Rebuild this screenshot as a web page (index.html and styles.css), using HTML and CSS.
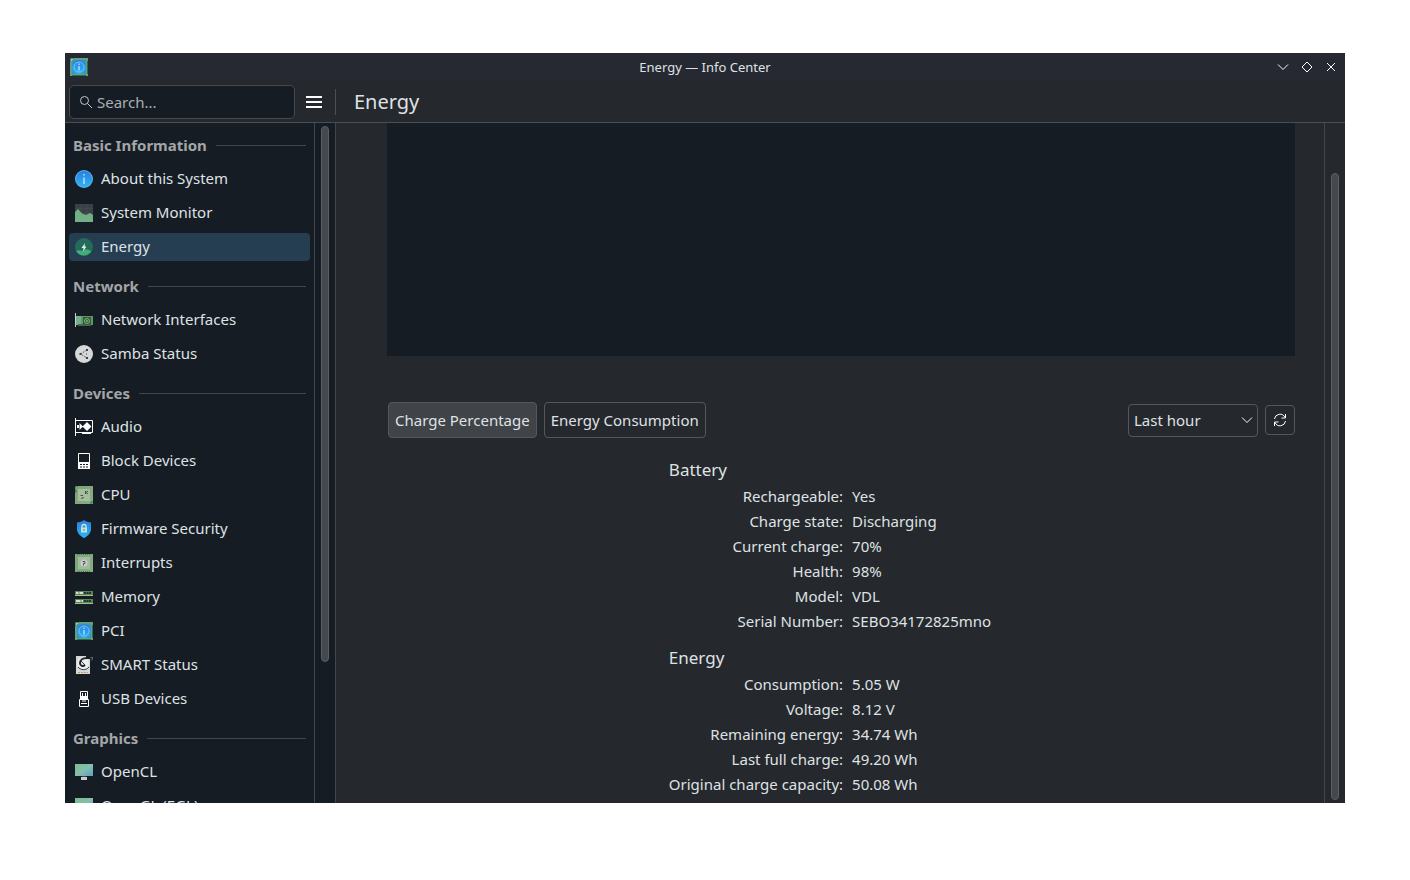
FILE: index.html
```
<!DOCTYPE html>
<html lang="en">
<head>
  <meta charset="UTF-8">
  <meta name="viewport" content="width=device-width, initial-scale=1.0">
  <title>Energy — Info Center</title>
  <link rel="stylesheet" href="styles.css">
</head>
<body>
  <!-- shared icon shapes -->
  <svg class="defs" aria-hidden="true">
    <defs>
      <linearGradient id="blue" x1="0" y1="0" x2="0" y2="1">
        <stop offset="0" stop-color="#2a7fe0"/>
        <stop offset="1" stop-color="#2fb4f4"/>
      </linearGradient>
      <linearGradient id="board" x1="0" y1="0" x2="1" y2="1">
        <stop offset="0" stop-color="#7ba577"/>
        <stop offset="1" stop-color="#86ad80"/>
      </linearGradient>
      <linearGradient id="screen" x1="0" y1="0" x2="1" y2="1">
        <stop offset="0" stop-color="#6fb592"/>
        <stop offset="0.5" stop-color="#86bfae"/>
        <stop offset="1" stop-color="#5a9fc0"/>
      </linearGradient>
      <symbol id="icon-pci" viewBox="0 0 18 18">
        <rect width="18" height="18" fill="#5fa184"/>
        <path d="M0 4V0h4M2 17.500h14M17.500 3v13" fill="none" stroke="#2f6a4c"/>
        <rect x="1" y="1" width="2" height="2" fill="#9fd0a0"/>
        <rect x="2" y="2" width="14" height="14" fill="#3b93b8"/>
        <circle cx="9" cy="9" r="7" fill="url(#blue)"/>
        <circle cx="9" cy="9" r="5" fill="none" stroke="#72c4f6"/>
        <path d="M9 5.500v1.500M9 8v4.500" stroke="#c4e8fc" stroke-width="1.200"/>
      </symbol>
      <symbol id="icon-screen" viewBox="0 0 18 18">
        <rect y="1" width="18" height="12" fill="url(#screen)"/>
        <path d="M0 1h9L4 13H0z" fill="#84c49a" opacity="0.500"/>
        <rect x="7" y="13" width="4" height="2" fill="#3a4147"/>
        <rect x="6" y="14" width="6" height="3" fill="#c9cdd0"/>
      </symbol>
    </defs>
  </svg>

  <div class="window">
    <header class="titlebar">
      <svg class="icon app-icon"><use href="#icon-pci"/></svg>
      <span class="window-title">Energy — Info Center</span>
      <div class="window-buttons">
        <button type="button" aria-label="Minimize"><svg viewBox="0 0 12 12"><path d="M1 3.500l5 5 5-5"/></svg></button>
        <button type="button" aria-label="Maximize"><svg viewBox="0 0 12 12"><path d="M6 1l5 5-5 5-5-5z"/></svg></button>
        <button type="button" aria-label="Close"><svg viewBox="0 0 12 12"><path d="M2 2l8 8M10 2l-8 8"/></svg></button>
      </div>
    </header>

    <div class="toolbar">
      <div class="toolbar-side">
        <label class="search">
          <svg viewBox="0 0 14 14" aria-hidden="true"><circle cx="5.500" cy="5.500" r="4"/><path d="M8.500 8.500l4.500 4.500"/></svg>
          <input type="text" placeholder="Search..." aria-label="Search">
        </label>
        <button type="button" class="menu-button" aria-label="Menu">
          <svg viewBox="0 0 16 12"><path d="M0 1h16M0 6h16M0 11h16"/></svg>
        </button>
      </div>
      <h1>Energy</h1>
    </div>

    <div class="content">
      <nav class="sidebar">
        <h2>Basic Information</h2>
        <ul>
          <li><a href="#about">
            <svg class="icon" viewBox="0 0 18 18"><circle cx="9" cy="9" r="9" fill="#55b4f5"/><circle cx="9" cy="9" r="8" fill="url(#blue)"/><path d="M9 4v1.500M9 7.500v6.500" stroke="#d3ecfc" stroke-width="1.300"/></svg>
            About this System</a></li>
          <li><a href="#monitor">
            <svg class="icon" viewBox="0 0 18 18"><rect width="18" height="18" fill="#3b4045"/><path d="M0 4.500h18M0 9.500h18M6 0v18M12 0v18" stroke="#4a5055" stroke-width="0.500"/><path d="M0 8l3-3 4 4.500 4 1.500 4-2 3 2v7H0z" fill="#70b084"/></svg>
            System Monitor</a></li>
          <li class="selected"><a href="#energy" aria-current="page">
            <svg class="icon" viewBox="0 0 18 18"><circle cx="9" cy="9" r="9" fill="#256b5c"/><path d="M1 13c3-2 5 1 8-1 3-1 5 0 7.500 1A9 9 0 0 1 1 13z" fill="#3fae78"/><path d="M10 5L6.500 10h2L8 13.500l3.500-5H9.500z" fill="#e5f3ea"/></svg>
            Energy</a></li>
        </ul>
        <h2>Network</h2>
        <ul>
          <li><a href="#interfaces">
            <svg class="icon" viewBox="0 0 18 18"><path d="M0.500 2v14" stroke="#c4cbc8"/><rect x="1" y="5" width="17" height="9" fill="#5c9a63"/><rect x="1" y="5" width="5" height="9" fill="#76ad8d"/><rect x="3" y="13" width="13" height="2" fill="#3f6d45"/><rect x="8" y="6" width="8" height="8" fill="#315f3b"/><circle cx="12" cy="10" r="2.500" fill="none" stroke="#85ad7a"/><path d="M11 10h2" stroke="#b0cba3"/></svg>
            Network Interfaces</a></li>
          <li><a href="#samba">
            <svg class="icon" viewBox="0 0 18 18"><circle cx="9" cy="9" r="9" fill="#d5d7d8"/><path d="M12 5L5.500 9l6.500 4" fill="none" stroke="#62676b" stroke-dasharray="2 1"/><path d="M11 4h2v2h-2zM4.500 8h2v2h-2zM11 12h2v2h-2zM11 8.500h1v1h-1z" fill="#3c4145"/></svg>
            Samba Status</a></li>
        </ul>
        <h2>Devices</h2>
        <ul>
          <li><a href="#audio">
            <svg class="icon" viewBox="0 0 18 18"><path d="M0.500 0v18M0 2.500h17.500v12H0M7 15.500h9" fill="none" stroke="#fcfcfc"/><path d="M12 4l4.500 4.500L12 13 7.500 8.500zM4.500 5L8 8.500 4.500 12zM2 7h2v3H2z" fill="#fcfcfc"/></svg>
            Audio</a></li>
          <li><a href="#block">
            <svg class="icon" viewBox="0 0 18 18"><path d="M3.500 1.500h11v15h-11z" fill="none" stroke="#fcfcfc"/><path d="M3 10h12v7H3z" fill="#fcfcfc"/><path d="M5 12.500h2M8 12.500h2M11 12.500h2M5 15h2M8 15h2M11 15h2" stroke="#161c23"/></svg>
            Block Devices</a></li>
          <li><a href="#cpu">
            <svg class="icon" viewBox="0 0 18 18"><rect width="18" height="18" fill="url(#board)"/><path d="M0 3V0h3M0 4h1v2H0M15 17h2M17 15v2" fill="none" stroke="#3d6b43"/><rect x="3" y="3" width="12" height="12" fill="#a6bda0"/><path d="M10.500 5v3M13 5l-2 1.500L13 8M8 9.500H5.500M9 11.500l-3 1" fill="none" stroke="#43564a"/></svg>
            CPU</a></li>
          <li><a href="#firmware">
            <svg class="icon" viewBox="0 0 18 18"><path d="M9 0c2 1.500 4.500 2.500 7 2.500V9c0 4-3 7-7 9-4-2-7-5-7-9V2.500C4.500 2.500 7 1.500 9 0z" fill="url(#blue)"/><path d="M7 8V6.500a2 2 0 0 1 4 0V8" fill="none" stroke="#d5eadf" stroke-width="1.300"/><rect x="6" y="7.500" width="6" height="5" fill="#c2e3da"/><path d="M9 9v2" stroke="#3d8fc8"/></svg>
            Firmware Security</a></li>
          <li><a href="#interrupts">
            <svg class="icon" viewBox="0 0 18 18"><rect width="18" height="18" fill="url(#board)"/><path d="M2 .5h14M2 17.500h14" stroke="#497c50" stroke-dasharray="1 1"/><rect x="3" y="3" width="12" height="12" fill="#a3b9a1"/><circle cx="9" cy="9" r="3.500" fill="#c9d0ca"/><path d="M7.500 7.500h2.500v2H8.500v2" fill="none" stroke="#4b5752"/></svg>
            Interrupts</a></li>
          <li><a href="#memory">
            <svg class="icon" viewBox="0 0 18 18"><path d="M0 3h18v5H0zM0 11h18v5H0z" fill="#568459"/><path d="M1 5h7M1 13h7" stroke="#d4ddcf" stroke-width="2"/><path d="M9 5h7M9 13h7" stroke="#25382c" stroke-width="2" stroke-dasharray="2 .5"/><path d="M0 7.500h18M0 15.500h18" stroke="#a9bd8f"/><path d="M4 4v2M6 12v2" stroke="#568459"/></svg>
            Memory</a></li>
          <li><a href="#pci">
            <svg class="icon"><use href="#icon-pci"/></svg>
            PCI</a></li>
          <li><a href="#smart">
            <svg class="icon" viewBox="0 0 18 18"><path d="M1 0h14v18H1z" fill="#d6d8d7"/><circle cx="8" cy="7.500" r="6" fill="#eceeed"/><path d="M12 2C8 2 5 4 5 7s3 4 5 2" fill="none" stroke="#20262b" stroke-width="2"/><path d="M6 5l4 4M3 11c2 3 8 4 11 0" fill="none" stroke="#343b40"/><path d="M11 0h4v3h-4z" fill="#161c23"/><path d="M15.500 1.500h2v1.500L16 4.500" fill="none" stroke="#6d7479"/><path d="M3 16.500h10" stroke="#b79d5e" stroke-dasharray="2 1"/></svg>
            SMART Status</a></li>
          <li><a href="#usb">
            <svg class="icon" viewBox="0 0 18 18"><path d="M5.500 1.500h7v7h-7zM4.500 9.500h9v7h-9z" fill="none" stroke="#fcfcfc"/><path d="M5 6h8v3H5z" fill="#fcfcfc"/><path d="M7.500 3v3M10.500 3v3M6 13.500h6M7 11h4" stroke="#fcfcfc"/></svg>
            USB Devices</a></li>
        </ul>
        <h2>Graphics</h2>
        <ul>
          <li><a href="#opencl"><svg class="icon"><use href="#icon-screen"/></svg> OpenCL</a></li>
          <li><a href="#opengl"><svg class="icon"><use href="#icon-screen"/></svg> OpenGL (EGL)</a></li>
        </ul>
      </nav>
      <div class="scrollbar sidebar-scrollbar"><div class="thumb"></div></div>

      <main class="page">
        <div class="chart"></div>
        <div class="controls">
          <button type="button" class="tab active">Charge Percentage</button>
          <button type="button" class="tab">Energy Consumption</button>
          <div class="select">
            <select aria-label="Time range">
              <option>Last hour</option>
            </select>
            <svg viewBox="0 0 12 12" aria-hidden="true"><path d="M1 3.500l5 5 5-5"/></svg>
          </div>
          <button type="button" class="refresh" aria-label="Refresh">
            <svg viewBox="0 0 14 14"><path d="M1.500 6A5.500 5.500 0 0 1 12 4.500M12.500 8A5.500 5.500 0 0 1 2 9.500M12.500 1v4h-4M1.500 13V9h4"/></svg>
          </button>
        </div>
        <table class="details">
          <tbody>
            <tr class="group"><th colspan="2" scope="rowgroup">Battery</th></tr>
            <tr><th scope="row">Rechargeable:</th><td>Yes</td></tr>
            <tr><th scope="row">Charge state:</th><td>Discharging</td></tr>
            <tr><th scope="row">Current charge:</th><td>70%</td></tr>
            <tr><th scope="row">Health:</th><td>98%</td></tr>
            <tr><th scope="row">Model:</th><td>VDL</td></tr>
            <tr><th scope="row">Serial Number:</th><td>SEBO34172825mno</td></tr>
          </tbody>
          <tbody>
            <tr class="group"><th colspan="2" scope="rowgroup">Energy</th></tr>
            <tr><th scope="row">Consumption:</th><td>5.05 W</td></tr>
            <tr><th scope="row">Voltage:</th><td>8.12 V</td></tr>
            <tr><th scope="row">Remaining energy:</th><td>34.74 Wh</td></tr>
            <tr><th scope="row">Last full charge:</th><td>49.20 Wh</td></tr>
            <tr><th scope="row">Original charge capacity:</th><td>50.08 Wh</td></tr>
          </tbody>
        </table>
      </main>
      <div class="scrollbar page-scrollbar"><div class="thumb"></div></div>
    </div>
  </div>
</body>
</html>
```
FILE: styles.css
```
* {
  box-sizing: border-box;
}

body {
  margin: 0;
  height: 100vh;
  padding: 53px 65px 77px;
  background: #fff;
  color: #dfe2e5;
  font-family: "Noto Sans", sans-serif;
  font-size: 15px;
  line-height: 20px;
}

button,
input,
select {
  font: inherit;
  color: inherit;
}

button {
  padding: 0;
  border: none;
  background: none;
}

h1,
h2,
ul {
  margin: 0;
  padding: 0;
}

svg {
  display: block;
  flex: none;
  fill: none;
  stroke: #fcfcfc;
}

.defs {
  position: absolute;
  width: 0;
  height: 0;
}

.icon {
  width: 18px;
  height: 18px;
  stroke: none;
}

.window {
  display: flex;
  flex-direction: column;
  height: 100%;
  overflow: hidden;
  background: #25282c;
}

/* title bar */
.titlebar {
  display: grid;
  grid-template-columns: 1fr auto 1fr;
  align-items: center;
  height: 28px;
  padding: 0 8px;
  background: #262931;
}

.app-icon {
  margin-left: -3px;
}

.window-title {
  font-size: 13px;
}

.window-buttons {
  display: flex;
  justify-content: flex-end;
  gap: 12px;
}

.window-buttons svg {
  width: 12px;
  height: 12px;
}

/* toolbar */
.toolbar {
  display: flex;
  align-items: center;
  height: 42px;
  border-bottom: 1px solid #4b4e52;
}

.toolbar-side {
  display: flex;
  align-items: center;
  gap: 11px;
  width: 271px;
  height: 26px;
  padding-left: 4px;
  border-right: 1px solid #4b4e52;
}

.search {
  display: flex;
  align-items: center;
  gap: 4px;
  width: 226px;
  height: 34px;
  padding: 0 9px;
  border: 1px solid #454a50;
  border-radius: 5px;
  background: #161c23;
}

.search svg {
  width: 14px;
  height: 14px;
  stroke: #c3c7cb;
}

.search input {
  flex: 1;
  min-width: 0;
  padding: 0;
  border: none;
  outline: none;
  background: none;
}

.search input::placeholder {
  color: #a9aeb3;
  opacity: 1;
}

.menu-button svg {
  width: 16px;
  height: 12px;
  stroke-width: 2;
}

h1 {
  padding-left: 18px;
  font-size: 20px;
  font-weight: 400;
}

/* sidebar */
.content {
  display: flex;
  flex: 1;
  min-height: 0;
}

.sidebar {
  width: 249px;
  overflow-y: auto;
  scrollbar-width: none;
  background: #161c23;
}

.sidebar h2 {
  display: flex;
  align-items: center;
  gap: 9px;
  height: 39px;
  padding: 5px 8px 0;
  color: #a3a6a9;
  font-size: 15px;
  font-weight: 700;
}

.sidebar h2::after {
  content: "";
  flex: 1;
  height: 1px;
  background: #42474c;
}

.sidebar ul {
  list-style: none;
}

.sidebar li {
  padding: 3px 4px;
}

.sidebar a {
  display: flex;
  align-items: center;
  gap: 8px;
  height: 28px;
  padding: 0 6px 2px;
  border-radius: 4px;
  color: inherit;
  text-decoration: none;
}

.sidebar .icon {
  margin-top: 2px;
}

.selected a {
  background: #263e52;
}

/* scrollbars */
.scrollbar {
  display: flex;
  flex-direction: column;
  align-items: center;
  padding: 3px 0;
  border-left: 1px solid #42464b;
}

.thumb {
  width: 8px;
  border: 1px solid #5b5f63;
  border-radius: 4px;
  background: #45494d;
}

.sidebar-scrollbar {
  width: 22px;
  border-right: 1px solid #42464b;
  background: #161c23;
}

.sidebar-scrollbar .thumb {
  height: 79.5%;
}

.page-scrollbar {
  width: 21px;
  padding-top: 50px;
}

.page-scrollbar .thumb {
  flex: 1;
}

/* energy page */
.page {
  flex: 1;
  min-width: 0;
  overflow-y: auto;
  scrollbar-width: none;
}

.chart {
  height: 233px;
  margin: 0 29px 0 51px;
  background: #161c23;
}

.controls {
  display: flex;
  align-items: center;
  gap: 7px;
  margin: 46px 29px 0 52px;
}

.tab {
  height: 36px;
  padding: 0 6px;
  border: 1px solid #54585c;
  border-radius: 4px;
}

.tab.active {
  background: #404347;
}

.select {
  display: grid;
  align-items: center;
  width: 130px;
  margin-left: auto;
}

.select select,
.select svg {
  grid-area: 1 / 1;
}

.select select {
  appearance: none;
  width: 100%;
  height: 33px;
  padding: 0 5px;
  border: 1px solid #54585c;
  border-radius: 4px;
  background: #25282c;
}

.select svg {
  justify-self: end;
  width: 12px;
  height: 12px;
  margin-right: 5px;
  pointer-events: none;
}

.refresh {
  display: grid;
  place-items: center;
  width: 30px;
  height: 30px;
  border: 1px solid #54585c;
  border-radius: 4px;
}

.refresh svg {
  width: 14px;
  height: 14px;
}

.details {
  margin: 8px auto 0;
  border-collapse: collapse;
}

.details th,
.details td {
  height: 25px;
  padding: 0 0 2px;
  font-weight: 400;
  text-align: right;
  white-space: nowrap;
}

.details td {
  padding-left: 9px;
  text-align: left;
}

.details .group th {
  height: 38px;
  padding: 10px 0 0;
  font-size: 17px;
  text-align: left;
}
```
